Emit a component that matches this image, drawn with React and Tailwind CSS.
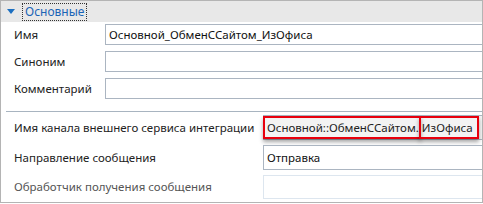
import React from 'react';

const font = { fontFamily: '"Noto Sans", "Open Sans", sans-serif' };

function Row({ label, value, top }) {
  return (
    <div className={`flex items-center h-[21px] ${top ? '' : 'mt-[6px]'}`}>
      <div className="w-[104px] pl-[13px] text-[11.5px] text-[#222]">{label}</div>
      <div className="flex-1 h-full border border-r-0 border-[#abb5c1] bg-white pl-[3px] text-[11.5px] text-[#111] flex items-center">
        {value}
      </div>
    </div>
  );
}

export default function App() {
  return (
    <div className="w-[483px] h-[204px] bg-white" style={font}>
      <div className="w-[483px] h-[203px] border border-[#b4b4b4] flex flex-col">
        <div className="h-[21px] bg-[#e8e8e8] flex items-center">
          <svg width="8" height="5" viewBox="0 0 8 5" className="ml-[6px]">
            <path d="M0 0 H8 L4 5 Z" fill="#1c6fc0" />
          </svg>
          <div className="ml-[7px] h-[18px] px-[2px] border border-dotted border-[#333] flex items-center text-[12px] text-[#1a64b6]">
            Основные
          </div>
        </div>

        <div className="mt-[2px]">
          <Row label="Имя" value="Основной_ОбменССайтом_ИзОфиса" top />
          <Row label="Синоним" value="" />
          <Row label="Комментарий" value="" />
        </div>

        <div className="ml-[5px] mt-[12px] h-px bg-[#a8b4c0]" />

        <div className="mt-[3px] flex items-center h-[25px]">
          <div className="w-[262px] pl-[13px] text-[11.5px] text-[#222] whitespace-nowrap">
            Имя канала внешнего сервиса интеграции
          </div>
          <div className="flex-1 h-full flex bg-[#f3f3f3] border-y border-[#abb5c1]">
            <div className="h-full flex items-center border-2 border-[#e8000d] pl-[2px] pr-0 text-[11.5px] text-[#222] shadow-[0_3px_4px_rgba(0,0,0,0.35)] whitespace-nowrap">
              Основной::ОбменССайтом.
            </div>
            <div className="h-full flex items-center border-2 border-[#e8000d] -ml-[2px] pl-px pr-[4px] text-[11.5px] text-[#222] shadow-[0_3px_4px_rgba(0,0,0,0.35)] whitespace-nowrap">
              ИзОфиса
            </div>
          </div>
        </div>

        <div className="mt-[5px] flex items-center h-[25px]">
          <div className="w-[262px] pl-[13px] text-[11.5px] text-[#222]">Направление сообщения</div>
          <div className="flex-1 h-full border border-r-0 border-[#abb5c1] bg-white pl-[3px] flex items-center text-[11.5px] text-[#111]">
            Отправка
          </div>
        </div>

        <div className="mt-[5px] flex items-center h-[24px]">
          <div className="w-[262px] pl-[13px] text-[11.5px] text-[#555]">Обработчик получения сообщения</div>
          <div className="flex-1 h-full border border-r-0 border-[#dde6ef] bg-white" />
        </div>
      </div>
    </div>
  );
}
